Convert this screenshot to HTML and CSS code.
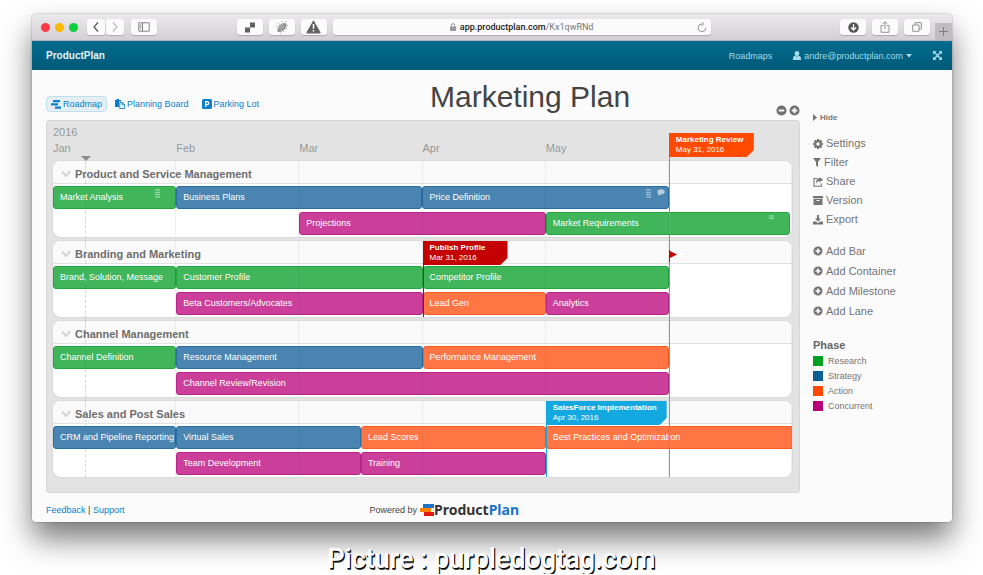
FILE: index.html
```html
<!DOCTYPE html>
<html lang="en">

<head>
  <meta charset="UTF-8" />
  <meta name="viewport" content="width=device-width, initial-scale=1" />
  <title>Marketing Plan - ProductPlan</title>
  <link rel="stylesheet" href="styles.css">
</head>

<body>
  <!-- icons -->
  <svg class="sprite" aria-hidden="true">
    <symbol id="plus-circle" viewBox="0 0 12 12"><path fill-rule="evenodd" d="M6 .5a5.5 5.5 0 1 0 0 11a5.5 5.5 0 0 0 0-11zM5 3h2v2h2v2H7v2H5V7H3V5h2z" fill="currentColor"/></symbol>
    <symbol id="minus-circle" viewBox="0 0 12 12"><path fill-rule="evenodd" d="M6 .5a5.5 5.5 0 1 0 0 11a5.5 5.5 0 0 0 0-11zM3 5h6v2H3z" fill="currentColor"/></symbol>
    <symbol id="chevron" viewBox="0 0 10 8"><path d="M1 1.500l4 4.500 4-4.500" fill="none" stroke="#d4d4d4" stroke-width="2"/></symbol>
    <symbol id="list" viewBox="0 0 5 9"><path d="M0 1h5M0 3.300h5M0 5.600h5M0 7.900h5" stroke="#fff" stroke-width="1"/></symbol>
  </svg>

  <div class="window">
    <div class="toolbar">
      <div class="lights">
        <span class="light red"></span>
        <span class="light yellow"></span>
        <span class="light green"></span>
      </div>
      <div class="history">
        <button aria-label="Back"><svg width="8" height="12" viewBox="0 0 8 12"><path d="M6 1.500L2 6l4 4.500" fill="none" stroke="#555" stroke-width="1.200"/></svg></button>
        <button aria-label="Forward"><svg width="8" height="12" viewBox="0 0 8 12"><path d="M2 1.500L6 6l-4 4.500" fill="none" stroke="#bbb" stroke-width="1.200"/></svg></button>
      </div>
      <button class="tool" aria-label="Sidebar"><svg width="12" height="10" viewBox="0 0 12 10"><path d="M.8.8h10.400v8.400H.8zM4.500.8v8.400M1.800 2.800h1.500M1.800 4.500h1.500M1.800 6.200h1.500" fill="none" stroke="#777" stroke-width=".9"/></svg></button>
      <div class="space-left"></div>
      <div class="tools">
        <button class="tool" aria-label="Delicious"><svg width="12" height="11" viewBox="0 0 12 11"><path d="M6 .5h5v5H6zM1 5.500h5v5H1z" fill="#606060"/></svg></button>
        <button class="tool" aria-label="Inspector"><svg width="16" height="15" viewBox="0 0 16 15"><ellipse cx="8" cy="7.500" rx="5.500" ry="3.200" transform="rotate(-45 8 7.500)" fill="#8c8c8c"/><path d="M5 9l4-5M6.500 10.500l4-5" stroke="#ddd" stroke-width=".7"/><path d="M2 6l2 1M4 3l2 2M8 1v2M3 12l2-2M6 14l1-2M10 12l-1-2M13 9l-2-1M14 5l-2 1M12 1l-1 3" stroke="#999" stroke-dasharray="1 1"/></svg></button>
        <button class="tool" aria-label="Warning"><svg width="15" height="14" viewBox="0 0 15 14"><path d="M7.500 1.200L14 12.800H1z" fill="#606060" stroke="#606060" stroke-width="1.200" stroke-linejoin="round"/><path d="M7.500 4v4.800M7.500 10v1.600" stroke="#fff" stroke-width="1.500"/></svg></button>
      </div>
      <div class="address">
        <svg width="6" height="8" viewBox="0 0 6 8"><path d="M0 3.500h6V8H0z" fill="#999"/><path d="M1.400 4V2.200a1.600 1.600 0 0 1 3.200 0V4" fill="none" stroke="#999"/></svg>
        <span class="url"><b>app.productplan.com</b>/Kx1qwRNd</span>
        <button class="reload" aria-label="Reload"><svg width="10" height="11" viewBox="0 0 10 11"><path d="M5 2a3.800 3.800 0 1 0 3.800 3.800M4.500.2L6.800 2 4.500 4" fill="none" stroke="#888" stroke-width=".9"/></svg></button>
      </div>
      <div class="space-right"></div>
      <div class="tools">
        <button class="tool" aria-label="Downloads"><svg width="11" height="11" viewBox="0 0 11 11"><circle cx="5.500" cy="5.500" r="5.200" fill="#555"/><path d="M5.500 2.200v5.500M3 5.500L5.500 8 8 5.500" fill="none" stroke="#fff" stroke-width="1.400"/></svg></button>
        <button class="tool" aria-label="Share page"><svg width="10" height="12" viewBox="0 0 10 12"><path d="M3.300 4.500H1v6.800h8V4.500H6.700M5 8V1M3 2.800L5 .8l2 2" fill="none" stroke="#888" stroke-width=".9"/></svg></button>
        <button class="tool" aria-label="Show tabs"><svg width="10" height="10" viewBox="0 0 10 10"><path d="M3 3V.7h6.300V7H7M.7 3H7v6.300H.7z" fill="none" stroke="#888" stroke-width=".9"/></svg></button>
      </div>
      <button class="new-tab" aria-label="New tab"><svg width="9" height="9" viewBox="0 0 9 9"><path d="M4.500 0v9M0 4.500h9" stroke="#808080"/></svg></button>
    </div>

    <nav class="navbar">
      <a class="brand" href="#">ProductPlan</a>
      <a href="#">Roadmaps</a>
      <a class="user" href="#">
        <svg width="8" height="9" viewBox="0 0 8 9"><ellipse cx="4" cy="2.600" rx="2.300" ry="2.600" fill="currentColor"/><path d="M0 9V7.200C0 5.700 1.200 5 2.200 4.800Q4 6 5.800 4.800C6.800 5 8 5.700 8 7.200V9z" fill="currentColor"/></svg>
        andre@productplan.com
        <svg width="6" height="4" viewBox="0 0 6 4"><path d="M0 0h6L3 3.500z" fill="currentColor"/></svg>
      </a>
      <a class="expand" href="#" aria-label="Full screen"><svg width="9" height="9" viewBox="0 0 9 9"><path d="M0 0h3.500L0 3.500zM9 0v3.500L5.500 0zM0 9V5.500L3.500 9zM9 9H5.500L9 5.500z" fill="currentColor"/><path d="M1 1l7 7M8 1L1 8" stroke="currentColor" stroke-width="1.500"/></svg></a>
    </nav>

    <div class="content">
      <main class="main">
        <header class="page-header">
          <div class="tabs">
            <a class="tab active" href="#"><svg width="10" height="9" viewBox="0 0 10 9"><path d="M2 1.200h7M0 4.400h7M4 7.600h6" stroke="currentColor" stroke-width="2.200"/></svg>Roadmap</a>
            <a class="tab" href="#"><svg width="10" height="10" viewBox="0 0 10 10"><path d="M0 1h1.500V0h2.500v1H6v1.500H4V8H0z" fill="currentColor"/><path d="M4.800 3.500h2.700L9.400 5.500v4H4.800zM7.200 3.500v2.300h2.200" fill="#fff" stroke="currentColor" stroke-width=".9"/></svg>Planning Board</a>
            <a class="tab" href="#"><svg width="10" height="10" viewBox="0 0 10 10"><rect width="10" height="10" rx="1.500" fill="currentColor"/><path d="M3.700 8V2.700h1.600a1.400 1.400 0 0 1 0 2.900H3.700" fill="none" stroke="#fff" stroke-width="1.300"/></svg>Parking Lot</a>
          </div>
          <h1>Marketing Plan</h1>
          <div class="zoom">
            <button aria-label="Zoom out"><svg width="11" height="11"><use href="#minus-circle"/></svg></button>
            <button aria-label="Zoom in"><svg width="11" height="11"><use href="#plus-circle"/></svg></button>
          </div>
        </header>

        <div class="board">
          <div class="timeline">
            <div class="year">2016</div>
            <div class="months">
              <span>Jan</span><span>Feb</span><span>Mar</span><span>Apr</span><span>May</span>
            </div>

            <section class="lane">
              <h2><svg width="10" height="8"><use href="#chevron"/></svg>Product and Service Management</h2>
              <div class="bars">
                <div class="bar research c1 w2">Market Analysis <span class="marks inset"><svg width="5" height="9"><use href="#list"/></svg></span></div>
                <div class="bar strategy c3 w4">Business Plans</div>
                <div class="bar strategy c7 w4">Price Definition
                  <span class="marks"><svg width="5" height="9"><use href="#list"/></svg><svg width="8" height="7" viewBox="0 0 8 7"><ellipse cx="4" cy="2.800" rx="3.700" ry="2.600" fill="#fff"/><path d="M1.500 4l-.5 3 3-2z" fill="#fff"/></svg></span>
                </div>
                <div class="bar concurrent row2 c5 w4">Projections</div>
                <div class="bar research row2 c9 w4 short">Market Requirements <span class="marks inset"><svg width="5" height="5" viewBox="0 0 5 5"><path d="M0 1h5M0 3.300h5" stroke="#fff"/></svg></span></div>
              </div>
            </section>

            <section class="lane">
              <h2><svg width="10" height="8"><use href="#chevron"/></svg>Branding and Marketing</h2>
              <div class="bars">
                <div class="bar research c1 w2">Brand, Solution, Message</div>
                <div class="bar research c3 w4">Customer Profile</div>
                <div class="bar research c7 w4">Competitor Profile</div>
                <div class="bar concurrent row2 c3 w4">Beta Customers/Advocates</div>
                <div class="bar action row2 c7 w2">Lead Gen</div>
                <div class="bar concurrent row2 c9 w2">Analytics</div>
              </div>
              <div class="milestone publish"><div class="flag"><b>Publish Profile</b>Mar 31, 2016</div></div>
              <svg class="pennant" width="8" height="12" viewBox="0 0 8 12"><path d="M0 0v12h1V8l7-3.500L1 1V0z" fill="#c40000"/></svg>
            </section>

            <section class="lane">
              <h2><svg width="10" height="8"><use href="#chevron"/></svg>Channel Management</h2>
              <div class="bars">
                <div class="bar research c1 w2">Channel Definition</div>
                <div class="bar strategy c3 w4">Resource Management</div>
                <div class="bar action c7 w4">Performance Management</div>
                <div class="bar concurrent row2 c3 w8">Channel Review/Revision</div>
              </div>
            </section>

            <section class="lane">
              <h2><svg width="10" height="8"><use href="#chevron"/></svg>Sales and Post Sales</h2>
              <div class="bars">
                <div class="bar strategy c1 w2">CRM and Pipeline Reporting</div>
                <div class="bar strategy c3 w3">Virtual Sales</div>
                <div class="bar action c6 w3">Lead Scores</div>
                <div class="bar action c9 w4 open">Best Practices and Optimization</div>
                <div class="bar concurrent row2 c3 w3">Team Development</div>
                <div class="bar concurrent row2 c6 w3">Training</div>
              </div>
              <div class="milestone salesforce"><div class="flag"><b>SalesForce Implementation</b>Apr 30, 2016</div></div>
            </section>

            <div class="today"></div>
            <div class="milestone review"><div class="flag"><b>Marketing Review</b>May 31, 2016</div></div>
          </div>
        </div>

        <footer class="footer">
          <div><a href="#">Feedback</a> | <a href="#">Support</a></div>
          <div class="powered">Powered by
            <svg width="14" height="12" viewBox="0 0 14 12"><path d="M3 0h11v4H3z" fill="#1a73c7"/><path d="M4 8h10v4H4z" fill="#e3170a"/><path d="M0 4h11v4H0z" fill="#ff8200"/></svg><span class="logo">Product<span>Plan</span></span>
          </div>
        </footer>
      </main>

      <aside class="sidebar">
        <button class="hide"><svg width="4" height="7" viewBox="0 0 4 7"><path d="M0 0l4 3.500L0 7z" fill="currentColor"/></svg>Hide</button>
        <ul class="menu">
          <li><button><svg width="10" height="10" viewBox="0 0 10 10"><circle cx="5" cy="5" r="2.800" fill="none" stroke="currentColor" stroke-width="2.200"/><path d="M5 0v1.500M5 8.500V10M0 5h1.500M8.500 5H10M1.500 1.500l1 1M7.500 7.500l1 1M8.500 1.500l-1 1M2.500 7.500l-1 1" stroke="currentColor" stroke-width="2"/></svg>Settings</button></li>
          <li><button><svg width="8" height="9" viewBox="0 0 8 9"><path d="M0 0h8L5 4v5L3 7.500V4z" fill="currentColor"/></svg>Filter</button></li>
          <li><button><svg width="10" height="10" viewBox="0 0 10 10"><path d="M4.500 1.500H1v7.800h7.300V6.500" fill="none" stroke="currentColor" stroke-width="1.100"/><path d="M6.500 0L10 2.800 6.500 5.600V4C4.800 4 4 4.800 3.600 6.800 2.500 3.500 4 1.700 6.500 1.600z" fill="currentColor"/></svg>Share</button></li>
          <li><button><svg width="10" height="9" viewBox="0 0 10 9"><path d="M0 0h10v2.300H0z" fill="currentColor"/><path fill-rule="evenodd" d="M.5 3h9v6h-9zM3.500 4v1h3V4z" fill="currentColor"/></svg>Version</button></li>
          <li><button><svg width="10" height="10" viewBox="0 0 10 10"><path d="M4 0h2v3.500h2L5 6.700 2 3.500h2zM0 6.500h3l2 1.700 2-1.700h3v3H0z" fill="currentColor"/></svg>Export</button></li>
        </ul>
        <ul class="menu add">
          <li><button><svg width="10" height="10"><use href="#plus-circle"/></svg>Add Bar</button></li>
          <li><button><svg width="10" height="10"><use href="#plus-circle"/></svg>Add Container</button></li>
          <li><button><svg width="10" height="10"><use href="#plus-circle"/></svg>Add Milestone</button></li>
          <li><button><svg width="10" height="10"><use href="#plus-circle"/></svg>Add Lane</button></li>
        </ul>
        <h3>Phase</h3>
        <ul class="legend">
          <li><span class="swatch research"></span>Research</li>
          <li><span class="swatch strategy"></span>Strategy</li>
          <li><span class="swatch action"></span>Action</li>
          <li><span class="swatch concurrent"></span>Concurrent</li>
        </ul>
      </aside>
    </div>
  </div>

  <p class="caption">Picture : purpledogtag.com</p>
</body>

</html>
```
FILE: styles.css
```css
* {
  box-sizing: border-box;
}

body {
  margin: 0;
  background-color: #fff;
  font-family: 'Liberation Sans', Arial, sans-serif;
  font-size: 9px;
  color: #444;
}

h1, h2, h3, p, ul {
  margin: 0;
  padding: 0;
}

ul {
  list-style: none;
}

a {
  color: #0a7fcb;
  text-decoration: none;
}

button {
  padding: 0;
  border: none;
  background: none;
  font: inherit;
  color: inherit;
  cursor: pointer;
}

svg {
  display: block;
  flex: none;
}

.sprite {
  position: absolute;
  width: 0;
  height: 0;
}

/* browser window */
.window {
  margin: 14px 31px 0 32px;
  background: #fbfbfb;
  border-radius: 4px;
  box-shadow: 0 0 2px rgba(0, 0, 0, 0.4), 0 17px 30px rgba(0, 0, 0, 0.52);
}

.toolbar {
  display: flex;
  align-items: center;
  height: 27px;
  padding-left: 9px;
  background: linear-gradient(#ebe9eb, #d3d0d3);
  border-bottom: 1px solid #b5b2b5;
  border-radius: 4px 4px 0 0;
}

.lights {
  display: flex;
  gap: 5px;
}

.light {
  width: 9px;
  height: 9px;
  border-radius: 50%;
}

.light.red {
  background: #fc3b47;
}

.light.yellow {
  background: #fdb803;
}

.light.green {
  background: #0bcf3c;
}

.history {
  display: flex;
  gap: 1px;
  margin: 0 7px 0 9px;
}

.history button,
.tool,
.address {
  display: flex;
  align-items: center;
  justify-content: center;
  height: 16px;
  background: #fbfbfb;
  border-radius: 3px;
  box-shadow: 0 1px 1px rgba(0, 0, 0, 0.2);
}

.history button {
  width: 18px;
}

.tool {
  width: 26px;
}

.tools {
  display: flex;
  gap: 6px;
}

.space-left {
  flex: 8;
}

.space-right {
  flex: 13;
}

.address {
  position: relative;
  flex: 38;
  gap: 4px;
  margin-left: 6px;
}

.url {
  font-family: Roboto, sans-serif;
  color: #777;
}

.url b {
  font-weight: 500;
  color: #222;
}

.reload {
  position: absolute;
  right: 4px;
}

.new-tab {
  display: flex;
  align-items: center;
  justify-content: center;
  align-self: flex-end;
  width: 17px;
  height: 17px;
  margin-left: 5px;
  background: #c0bdc0;
}

.navbar {
  display: flex;
  align-items: center;
  gap: 21px;
  height: 29px;
  padding: 0 10px 0 14px;
  background: linear-gradient(#006b8e, #005a78);
}

.navbar a {
  color: #a5dbea;
}

.navbar .brand {
  margin-right: auto;
  font-size: 10px;
  font-weight: bold;
  color: #e4f4f8;
}

.user {
  display: flex;
  align-items: center;
  gap: 3px;
}

.content {
  display: flex;
  padding-left: 14px;
}

.main {
  flex: 1;
}

.page-header {
  display: flex;
  align-items: flex-end;
  height: 50px;
}

.tabs {
  display: flex;
  gap: 3px;
  margin-bottom: 8px;
}

.tab {
  display: flex;
  align-items: center;
  gap: 2px;
  height: 16px;
  padding: 0 4px;
  border: 1px solid transparent;
  border-radius: 4px;
}

.tab.active {
  background: #e4f0f6;
  border-color: #c3dfec;
}

h1 {
  flex: 1;
  margin-bottom: 6px;
  padding-left: 20px;
  font-size: 30px;
  line-height: 34px;
  font-weight: normal;
  text-align: center;
}

.zoom {
  display: flex;
  gap: 2px;
  margin-bottom: 4px;
  color: #707070;
}

.board {
  padding: 0 7px 15px 6px;
  background: #e3e3e3;
  border: 1px solid #d5d5d5;
  border-radius: 3px;
}

.timeline {
  position: relative;
}

.year,
.months {
  font-size: 11px;
  line-height: 16px;
  color: #999;
}

.year {
  padding-top: 3px;
}

.months {
  display: grid;
  grid-template-columns: repeat(6, 1fr);
  padding-bottom: 5px;
}

.lane {
  position: relative;
  height: 76px;
  background: #fff;
  border-radius: 8px;
  box-shadow: 0 0 0 1px #dadada;
}

.lane + .lane {
  margin-top: 4px;
}

/* month lines, drawn over the bars */
.lane::after {
  content: '';
  position: absolute;
  inset: 0;
  background: repeating-linear-gradient(to right, transparent 0, transparent calc(100% / 6 - 1px), rgba(0, 0, 0, 0.06) calc(100% / 6 - 1px), rgba(0, 0, 0, 0.06) calc(100% / 6));
  border-radius: 8px;
  pointer-events: none;
}

.lane h2 {
  display: flex;
  align-items: center;
  gap: 4px;
  height: 23px;
  padding: 3px 8px 0;
  background: #fafafa;
  border-bottom: 1px solid #e2e2e2;
  border-radius: 8px 8px 0 0;
  font-size: 11px;
  color: #6e6e6e;
}

.bars {
  display: grid;
  grid-template-columns: repeat(12, 1fr);
  grid-template-rows: 23px 23px;
  row-gap: 3px;
  padding-top: 2px;
}

.bar {
  position: relative;
  grid-row: 1;
  padding-left: 6px;
  border: 1px solid;
  border-radius: 3px;
  line-height: 21px;
  color: #fff;
  white-space: nowrap;
}

.bar.row2 {
  grid-row: 2;
}

.bar.short {
  margin-right: 2px;
}

.bar.open {
  border-right: none;
  border-radius: 3px 0 0 3px;
}

.bar.research {
  background: #40b559;
  border-color: #22a63e;
}

.bar.strategy {
  background: #4a84b0;
  border-color: #276ea5;
}

.bar.action {
  background: #ff7543;
  border-color: #ff5c20;
}

.bar.concurrent {
  background: #cb3f9b;
  border-color: #b8248a;
}

/* start column and length, two columns per month */
.c1 { grid-column-start: 1; }
.c3 { grid-column-start: 3; }
.c5 { grid-column-start: 5; }
.c6 { grid-column-start: 6; }
.c7 { grid-column-start: 7; }
.c9 { grid-column-start: 9; }
.w2 { grid-column-end: span 2; }
.w3 { grid-column-end: span 3; }
.w4 { grid-column-end: span 4; }
.w8 { grid-column-end: span 8; }

.marks {
  position: absolute;
  top: 2px;
  right: 3px;
  display: flex;
  gap: 6px;
  opacity: 0.6;
}

.marks.inset {
  right: 15px;
}

.milestone {
  position: absolute;
  z-index: 2;
  top: 0;
  bottom: 0;
}

.milestone::before {
  content: '';
  position: absolute;
  top: 0;
  bottom: 0;
  left: 0;
  width: 1px;
}

.flag {
  min-width: 85px;
  height: 24px;
  padding: 2px 10px 0 7px;
  clip-path: polygon(0 0, 100% 0, 100% 17px, calc(100% - 7px) 100%, 0 100%);
  font-size: 8px;
  line-height: 10px;
  color: #fff;
  white-space: nowrap;
}

.flag b {
  display: block;
}

.publish {
  left: 50%;
}

.publish::before,
.publish .flag {
  background: #c40000;
}

.salesforce {
  left: calc(100% / 6 * 4);
}

.salesforce::before,
.salesforce .flag {
  background: #14a8e0;
}

.review {
  top: 12px;
  left: calc(100% / 6 * 5);
}

.review::before {
  background: #ff7038;
}

.review .flag {
  background: #ff4a00;
}

.pennant {
  position: absolute;
  z-index: 3;
  top: 9px;
  left: calc(100% / 6 * 5);
}

.today {
  position: absolute;
  top: 40px;
  bottom: 0;
  left: 4%;
  margin-left: 2px;
  border-left: 1px dashed rgba(220, 80, 80, 0.3);
}

.today::before {
  content: '';
  position: absolute;
  top: -5px;
  left: -5px;
  border: 5px solid transparent;
  border-top-color: #8c8c8c;
  border-bottom: none;
}

.footer {
  display: flex;
  align-items: center;
  height: 29px;
  padding-top: 4px;
}

.powered {
  flex: 1;
  display: flex;
  align-items: center;
  justify-content: center;
  gap: 3px;
  padding-right: 36px;
}

.logo {
  margin-left: -3px;
  font-family: 'Noto Sans', 'Open Sans', sans-serif;
  font-size: 14px;
  line-height: 16px;
  font-weight: bold;
  color: #333;
}

.logo span {
  color: #1a73c7;
}

.sidebar {
  width: 152px;
  padding: 41px 0 0 13px;
  color: #757575;
}

.hide {
  display: flex;
  align-items: center;
  gap: 3px;
  height: 12px;
  font-size: 8px;
  font-weight: bold;
}

.menu {
  margin-top: 11px;
  font-size: 11px;
  line-height: 19px;
}

.menu button {
  display: flex;
  align-items: center;
  gap: 3px;
}

.menu.add {
  margin-top: 12px;
  line-height: 20px;
}

.sidebar h3 {
  margin-top: 16px;
  font-size: 11px;
  line-height: 16px;
  color: #666;
}

.legend li {
  display: flex;
  align-items: center;
  gap: 5px;
  height: 15px;
}

.swatch {
  width: 10px;
  height: 10px;
}

.swatch.research {
  background: #00a020;
}

.swatch.strategy {
  background: #0c5c96;
}

.swatch.action {
  background: #ff4a00;
}

.swatch.concurrent {
  background: #b8007a;
}

.caption {
  position: relative;
  margin-top: 22px;
  font-family: Roboto, sans-serif;
  font-size: 27px;
  line-height: 30px;
  font-weight: 500;
  text-align: center;
  color: #fff;
  text-shadow: 1px 1px 0 #000, 1px 2px 0 #444;
}
```
